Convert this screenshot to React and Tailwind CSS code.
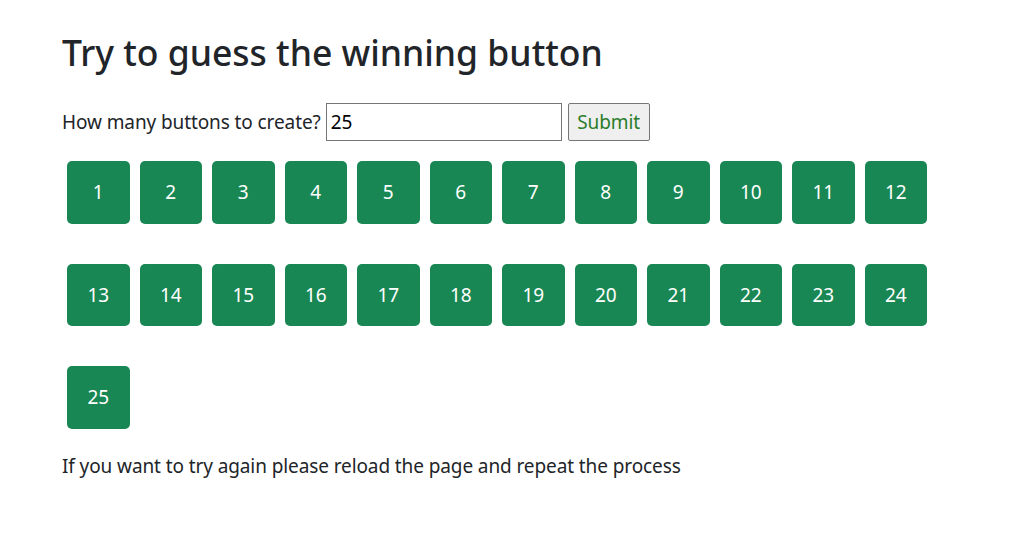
export default function App() {
  const buttons = Array.from({ length: 25 }, (_, i) => i + 1)

  return (
    <div className="min-h-[560px] bg-white px-[62px] pt-[27px] text-[19px] leading-[30px] tracking-[-0.1px] text-[#212529] font-['Noto_Sans',sans-serif]">
      <h1 className="mb-[25px] text-[35.5px] font-medium leading-[51px] tracking-normal">Try to guess the winning button</h1>

      <div className="flex items-center">
        <span className="mr-[5px]">How many buttons to create?</span>
        <input
          type="text"
          defaultValue="25"
          className="h-[38px] w-[236px] border border-[#767676] px-[4px] text-[19px] text-black outline-none"
        />
        <button className="ml-[6px] h-[38px] w-[82px] rounded-[2px] border border-[#767676] bg-[#efefef] text-[19px] text-[#2a7d2a]">
          Submit
        </button>
      </div>

      <div className="flex flex-wrap">
        {buttons.map((n) => (
          <button
            key={n}
            className="mx-[5px] my-[20px] flex h-[62.5px] w-[62.5px] items-center justify-center rounded-[5px] bg-[#198754] text-[19px] tracking-normal text-white"
          >
            {n}
          </button>
        ))}
      </div>

      <p className="mt-[2px]">If you want to try again please reload the page and repeat the process</p>
    </div>
  )
}
